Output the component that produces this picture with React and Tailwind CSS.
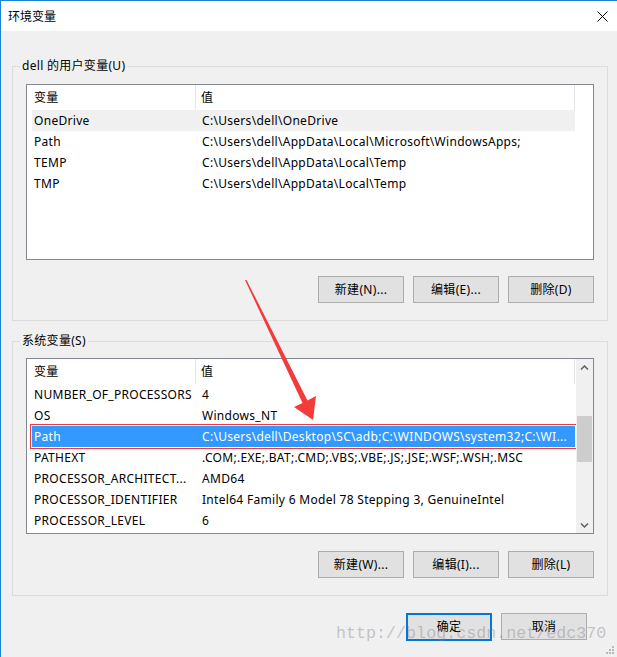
import React from "react";

const userVars = [
  ["OneDrive", "C:\\Users\\dell\\OneDrive", "hover"],
  ["Path", "C:\\Users\\dell\\AppData\\Local\\Microsoft\\WindowsApps;", ""],
  ["TEMP", "C:\\Users\\dell\\AppData\\Local\\Temp", ""],
  ["TMP", "C:\\Users\\dell\\AppData\\Local\\Temp", ""],
];

const sysVars = [
  ["NUMBER_OF_PROCESSORS", "4", ""],
  ["OS", "Windows_NT", ""],
  ["Path", "C:\\Users\\dell\\Desktop\\SC\\adb;C:\\WINDOWS\\system32;C:\\WI...", "sel"],
  ["PATHEXT", ".COM;.EXE;.BAT;.CMD;.VBS;.VBE;.JS;.JSE;.WSF;.WSH;.MSC", ""],
  ["PROCESSOR_ARCHITECT...", "AMD64", ""],
  ["PROCESSOR_IDENTIFIER", "Intel64 Family 6 Model 78 Stepping 3, GenuineIntel", ""],
  ["PROCESSOR_LEVEL", "6", ""],
];

function Header() {
  return (
    <div className="flex h-[25px] shrink-0">
      <div className="ml-[5px] w-[164px] h-full border-r border-[#e5e5e5] pl-[2px] flex items-center">变量</div>
      <div className="w-[379px] h-full border-r border-[#e5e5e5] pl-[5px] flex items-center">值</div>
    </div>
  );
}

function Row({ name, value, kind }) {
  let cls = "";
  if (kind === "hover") cls = "bg-[#f0f0f0]";
  if (kind === "sel") cls = "bg-[#3399ff] text-white outline outline-1 outline-offset-1 outline-[#f03a3a]";
  return (
    <div className={`flex ml-[5px] w-[543px] h-[21px] leading-[21px] shrink-0 ${cls}`}>
      <div className="w-[168px] pl-[2px] whitespace-nowrap overflow-hidden">{name}</div>
      <div className="flex-1 pl-[2px] whitespace-nowrap overflow-hidden">{value}</div>
    </div>
  );
}

function Btn({ children, primary }) {
  return (
    <div
      className={
        primary
          ? "w-[86px] h-[28px] bg-[#e1e1e1] border-2 border-[#0078d7] flex items-center justify-center"
          : "w-[86px] h-[27px] bg-[#e1e1e1] border border-[#adadad] flex items-center justify-center"
      }
    >
      {children}
    </div>
  );
}

function Chevron({ down }) {
  return (
    <svg width="9" height="6" viewBox="0 0 9 6">
      <path
        d={down ? "M1 1.5 L4.5 5 L8 1.5" : "M1 4.5 L4.5 1 L8 4.5"}
        fill="none"
        stroke="#606060"
        strokeWidth="1.5"
      />
    </svg>
  );
}

export default function App() {
  return (
    <div className="relative w-[617px] h-[657px] bg-[#f0f0f0] border-l border-t border-[#1883d7] overflow-hidden text-[12px] tracking-[0.3px] text-black font-[family-name:'Segoe_UI','Noto_Sans','Noto_Sans_CJK_SC',sans-serif]">
      {/* Title bar */}
      <div className="h-[30px] bg-white flex items-center justify-between pl-[7px] pr-[9px]">
        <span className="tracking-normal font-[family-name:'Noto_Sans_CJK_SC',sans-serif]">环境变量</span>
        <svg width="11" height="11" viewBox="0 0 11 11">
          <path d="M0.5 0.5 L10.5 10.5 M10.5 0.5 L0.5 10.5" stroke="#000" strokeWidth="1" />
        </svg>
      </div>

      <div className="flex flex-col pl-[11px]">
        {/* User vars */}
        <fieldset className="mt-[27px] w-[594px] border border-[#dcdcdc]">
          <legend className="ml-[7px] px-[2px] leading-[16px]">dell 的用户变量(U)</legend>
          <div className="px-[13px] pt-[10px] pb-[17px] flex flex-col">
            <div className="w-[568px] h-[176px] bg-white border border-[#828790] flex flex-col">
              <Header />
              {userVars.map(([n, v, k]) => (
                <Row key={n} name={n} value={v} kind={k} />
              ))}
            </div>
            <div className="mt-[16px] flex justify-end gap-[9px]">
              <Btn>新建(N)...</Btn>
              <Btn>编辑(E)...</Btn>
              <Btn>删除(D)</Btn>
            </div>
          </div>
        </fieldset>

        {/* System vars */}
        <fieldset className="mt-[12px] w-[594px] border border-[#dcdcdc]">
          <legend className="ml-[7px] px-[2px] leading-[16px]">系统变量(S)</legend>
          <div className="px-[13px] pt-[9px] pb-[17px] flex flex-col">
            <div className="w-[568px] h-[176px] bg-white border border-[#828790] flex">
              <div className="flex-1 flex flex-col overflow-hidden">
                <Header />
                {sysVars.map(([n, v, k]) => (
                  <Row key={n} name={n} value={v} kind={k} />
                ))}
              </div>
              <div className="w-[17px] bg-[#f0f0f0] flex flex-col">
                <div className="h-[17px] flex items-center justify-center">
                  <Chevron />
                </div>
                <div className="flex-1">
                  <div className="mt-[40px] mx-[1px] h-[46px] bg-[#cdcdcd]" />
                </div>
                <div className="h-[17px] flex items-center justify-center">
                  <Chevron down />
                </div>
              </div>
            </div>
            <div className="mt-[17px] flex justify-end gap-[9px]">
              <Btn>新建(W)...</Btn>
              <Btn>编辑(I)...</Btn>
              <Btn>删除(L)</Btn>
            </div>
          </div>
        </fieldset>

        {/* Bottom buttons */}
        <div className="mt-[17px] w-[594px] flex justify-end gap-[9px] pr-[19px]">
          <Btn primary>确定</Btn>
          <Btn>取消</Btn>
        </div>
      </div>

      {/* Watermark */}
      <div className="absolute left-[335px] top-[625px] leading-none tracking-normal text-[16.7px] text-[rgba(130,130,130,0.42)] font-[family-name:'Liberation_Mono',monospace] pointer-events-none whitespace-nowrap">
        http://blog.csdn.net/edc370
      </div>

      {/* Resize grip */}
      <svg className="absolute left-[603px] top-[643px]" width="12" height="12" viewBox="0 0 12 12">
        <rect x="8" y="2" width="2" height="2" fill="#b8b8b8" />
        <rect x="5" y="5" width="2" height="2" fill="#b8b8b8" />
        <rect x="8" y="5" width="2" height="2" fill="#b8b8b8" />
        <rect x="2" y="8" width="2" height="2" fill="#b8b8b8" />
        <rect x="5" y="8" width="2" height="2" fill="#b8b8b8" />
        <rect x="8" y="8" width="2" height="2" fill="#b8b8b8" />
      </svg>

      {/* Red annotation arrow */}
      <svg className="absolute left-0 top-0 pointer-events-none" width="617" height="657" viewBox="-1 -1 617 657">
        <polygon
          points="243,278 244.5,278 305.5,398.5 314,394 311,418 292,405 300.5,401"
          fill="#f23c3c"
        />
      </svg>
    </div>
  );
}
